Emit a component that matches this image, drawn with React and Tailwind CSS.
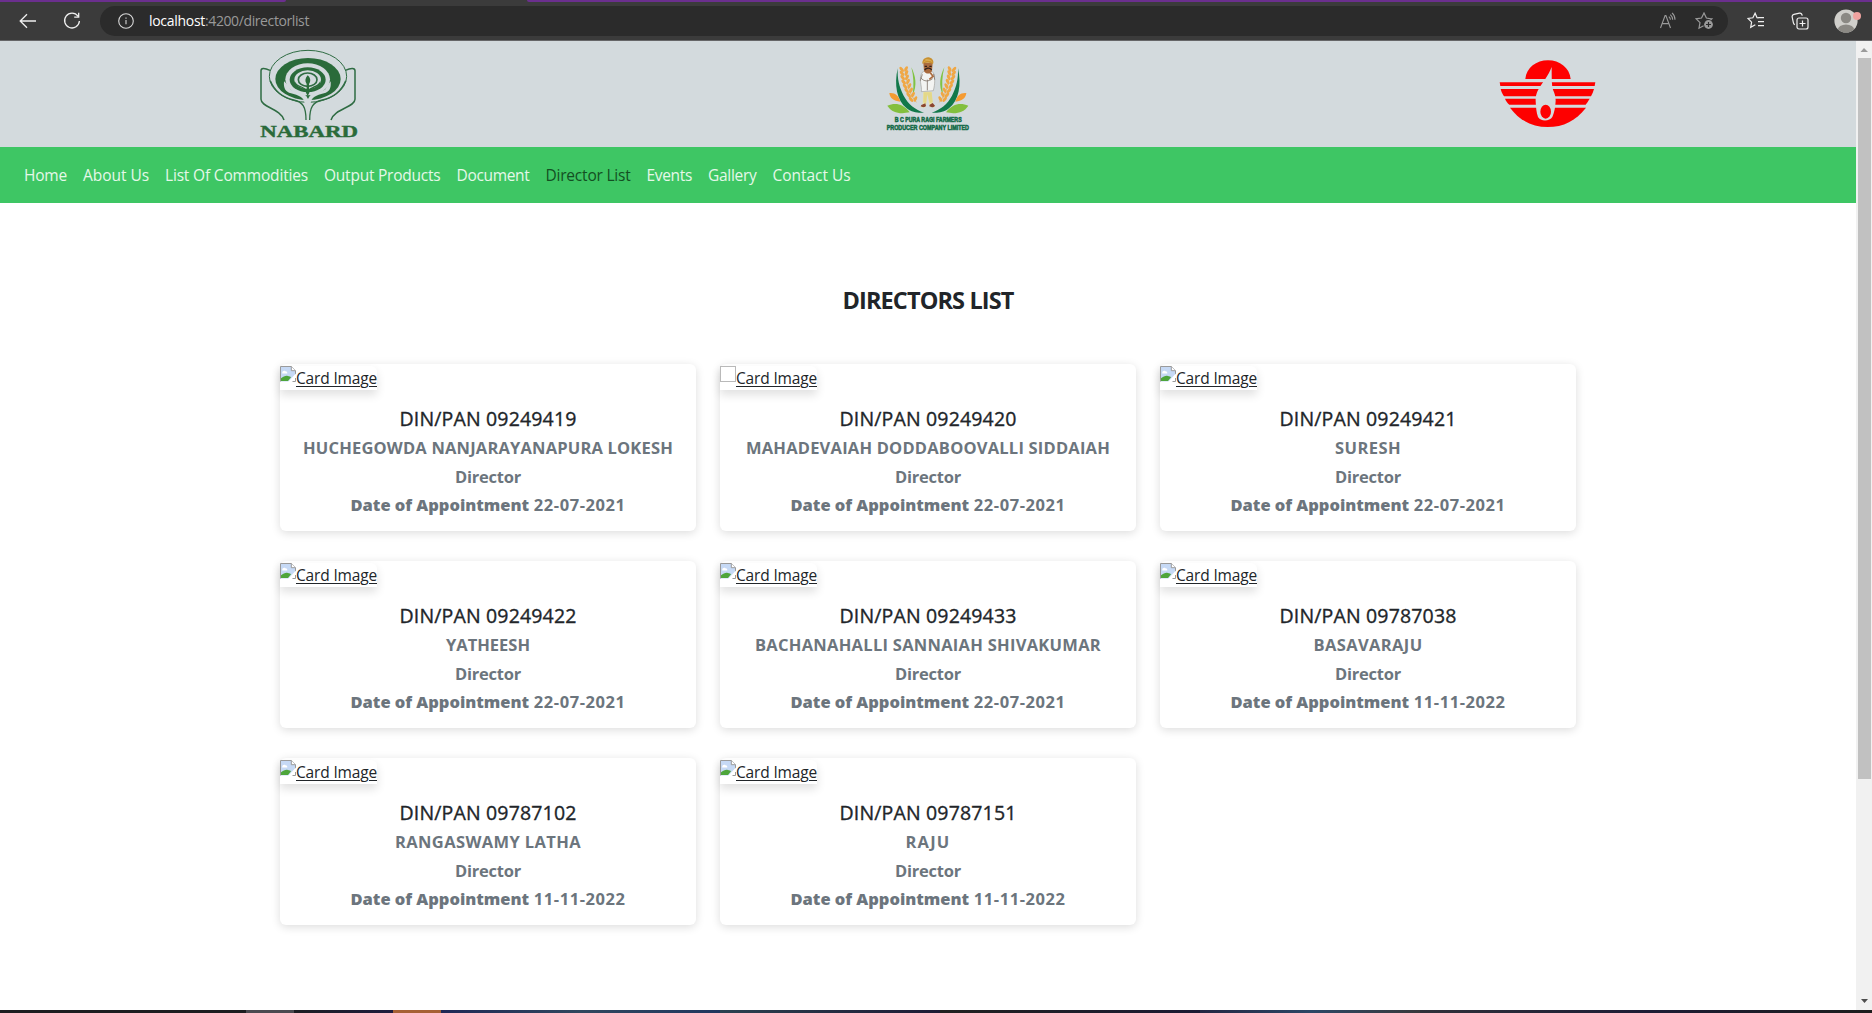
import { useLayoutEffect, useRef, useState } from "react";

const NAV = [
  ["Home", 43],
  ["About Us", 66],
  ["List Of Commodities", 143],
  ["Output Products", 116.5],
  ["Document", 73],
  ["Director List", 85],
  ["Events", 45.5],
  ["Gallery", 48.5],
  ["Contact Us", 78],
];

const DIRECTORS = [
  { din: "09249419", name: "HUCHEGOWDA NANJARAYANAPURA LOKESH", w: 370, date: "22-07-2021" },
  { din: "09249420", name: "MAHADEVAIAH DODDABOOVALLI SIDDAIAH", w: 364, date: "22-07-2021", empty: true },
  { din: "09249421", name: "SURESH", w: 66, date: "22-07-2021" },
  { din: "09249422", name: "YATHEESH", w: 84, date: "22-07-2021" },
  { din: "09249433", name: "BACHANAHALLI SANNAIAH SHIVAKUMAR", w: 346, date: "22-07-2021" },
  { din: "09787038", name: "BASAVARAJU", w: 109, date: "11-11-2022" },
  { din: "09787102", name: "RANGASWAMY LATHA", w: 186, date: "11-11-2022" },
  { din: "09787151", name: "RAJU", w: 45, date: "11-11-2022" },
];

// One line of text whose tracking is adjusted so that it fills the given width.
function Fit({ width, className = "", children }) {
  const ref = useRef(null);
  const [spacing, setSpacing] = useState(0);
  useLayoutEffect(() => {
    const el = ref.current;
    const natural = el.getBoundingClientRect().width;
    setSpacing((width - natural) / el.textContent.length);
  }, [width]);
  return (
    <span ref={ref} className={`inline-block whitespace-pre ${className}`} style={{ letterSpacing: `${spacing}px` }}>
      {children}
    </span>
  );
}

function Toolbar() {
  return (
    <header className="h-[41px] shrink-0 bg-[#3b3b3b] border-b border-[#666668]">
      <div className="flex h-[2px]">
        <div className="w-[286px] rounded-br bg-[#6b2f8e]" />
        <div className="w-[241px]" />
        <div className="flex-1 rounded-bl bg-[#6b2f8e]" />
      </div>
      <div className="flex h-[38px] items-center">
        <svg className="ml-[19px]" width="18" height="16" viewBox="0 0 18 16" fill="none" stroke="#f0f0f0" strokeWidth="1.3">
          <path d="M17 8H1.5M8 1.2 1.2 8 8 14.8" />
        </svg>
        <svg className="ml-[26px]" width="18" height="18" viewBox="0 0 18 18" fill="none" stroke="#f0f0f0" strokeWidth="1.3">
          <path d="M15 4.2A7.4 7.4 0 1 0 16.4 9M15.7.8v4.4h-4.5" />
        </svg>
        <div className="ml-[19px] flex h-[30px] w-[1628px] items-center rounded-full bg-[#2b2b2b] pl-[18px] pr-[13px]">
          <svg width="16" height="16" viewBox="0 0 16 16" fill="none" stroke="#d8d8d8" strokeWidth="1.1">
            <circle cx="8" cy="8" r="7.3" />
            <path d="M8 7v4.3M8 4.5v1.2" />
          </svg>
          <div className="ml-[15px] flex-1 text-[14px] leading-5">
            <Fit width={56} className="text-white">localhost</Fit>
            <Fit width={104} className="text-[#999]">:4200/directorlist</Fit>
          </div>
          <svg width="18" height="18" viewBox="0 0 18 18" fill="none" stroke="#9a9a9a" strokeWidth="1.1">
            <path d="M1.5 16 6.1 3.6h.8L11.5 16M3.2 11.6h6.6M9.8 4.6a4.4 4.4 0 0 1 1.6 3.2M11.3 2.6a7 7 0 0 1 2.4 5.2M13 .8a9 9 0 0 1 3 7" />
          </svg>
          <svg className="ml-[18px]" width="20" height="18" viewBox="0 0 20 18" fill="none" stroke="#9a9a9a" strokeWidth="1.2">
            <path d="M16 6.9 11.4 6 9 1 6.5 6l-5.3.8L5 10.6l-1 5.6 4.6-2.4" />
            <path d="M16 6.8h.8L15.6 8" />
            <circle cx="13.5" cy="12.5" r="4.4" fill="#9a9a9a" stroke="none" />
            <path d="M13.5 10v5M11 12.5h5" stroke="#2b2b2b" />
          </svg>
        </div>
        <svg className="ml-[19px]" width="18" height="18" viewBox="0 0 18 18" fill="none" stroke="#f0f0f0" strokeWidth="1.2">
          <path d="M11.5 5.8 10 5.6 8.1 1.2 5.9 5.8 1 6.5l3.6 3.6-.9 5.2 4.6-2.5M11.2 5.7H17M11 9.7h6M11 13.6h6" />
        </svg>
        <svg className="ml-[26px]" width="18" height="18" viewBox="0 0 18 18" fill="none" stroke="#f0f0f0" strokeWidth="1.2">
          <rect x="6" y="6" width="11" height="11" rx="2" />
          <path d="M11.5 8.5v6M8.5 11.5h6M3.8 12.7C2.7 12 2.5 11.3 2.3 10.3L1.2 5.2C.9 3.7 1.5 2.8 2.9 2.4L8.5 1.1c1.4-.3 2.2.2 2.8 2.6" />
        </svg>
        <svg className="ml-[24px]" width="28" height="24" viewBox="0 0 28 24">
          <clipPath id="avatar"><circle cx="13" cy="12" r="11.6" /></clipPath>
          <circle cx="13" cy="12" r="11.6" fill="#d0cfcb" />
          <g clipPath="url(#avatar)" fill="#8b8984">
            <circle cx="13" cy="9" r="5.2" />
            <ellipse cx="13" cy="20.8" rx="8.2" ry="5.4" />
          </g>
          <circle cx="24" cy="7" r="4" fill="#f0a3a0" />
        </svg>
      </div>
    </header>
  );
}

function NabardLogo() {
  return (
    <svg width="140" height="106" viewBox="-2 3 420 318" fill="none" stroke="#2f6c43" strokeWidth="4">
      <ellipse cx="205" cy="109" rx="116" ry="78" strokeWidth="3" />
      <ellipse cx="205" cy="117" rx="98" ry="63" fill="#2a6b3a" stroke="none" />
      <ellipse cx="204" cy="118" rx="67" ry="48" fill="#d3dadd" stroke="none" />
      <ellipse cx="204" cy="119" rx="54" ry="37" fill="#2a6b3a" stroke="none" />
      <ellipse cx="204" cy="119" rx="40" ry="28" fill="#d3dadd" stroke="none" />
      <ellipse cx="204" cy="119" rx="28" ry="20" strokeWidth="5" />
      <path
        d="M133 124c-2 21 5 32 21 36 22 6 40 12 41 31l1 50h16l1-50c1-19 17-25 40-31 16-4 22-15 20-36-8 10-12 16-15 23-12 11-37 7-48 21l-5 9-5-9c-12-14-37-10-48-21-5-8-9-14-19-23Z"
        fill="#d3dadd"
        stroke="none"
      />
      <path d="M165 123c-1 24 30 13 34 35l5 10 5-10c5-22 36-10 33-35-9 19-31 14-35 30h-7c-4-17-27-10-35-30Z" fill="#2a6b3a" stroke="none" />
      <path d="M204 106c-8 9-9 18-3 26v20h7v-20c6-8 5-18-4-26Z" fill="#2a6b3a" stroke="none" />
      <path d="M91 91c-18-8-27-7-27 1v86c0 24 59 28 69 62M317 91c18-8 29-7 29 1v86c0 24-62 28-72 62" strokeWidth="4.5" />
      <path d="M92 122c15 36 40 51 70 58 28 6 37 21 37 60M318 122c-15 36-40 51-70 58-28 6-38 21-38 60" />
      <text x="62" y="290" textLength="293" lengthAdjust="spacingAndGlyphs" fill="#2a6b3a" stroke="#2a6b3a" strokeWidth="1.2" className="font-['Liberation_Serif'] text-[49px] font-bold">
        NABARD
      </text>
    </svg>
  );
}

// Grain kernels of the left wheat ear, bottom to top: x, y.
const KERNELS = [
  [129, 163], [122, 150], [116, 137], [111, 124], [107, 111], [104, 98], [102, 85], [101, 73],
];

function WheatHalf() {
  return (
    <g>
      <path d="M83 70C72 120 80 166 110 190c17 14 36 14 52 13-26-9-47-25-61-51C87 126 82 101 83 70Z" fill="#12784a" />
      <path d="M124 67c13 26 18 55 4 83 4-30 3-55-4-83Z" fill="#80c342" />
      <path d="M109 77c0 41 9 69 30 95" stroke="#f3a53a" strokeWidth="2" fill="none" />
      {KERNELS.map(([x, y]) => (
        <g key={y} fill="#f0a744">
          <ellipse cx={x - 6} cy={y} rx="4.5" ry="9" transform={`rotate(-38 ${x - 6} ${y})`} />
          <ellipse cx={x + 7} cy={y - 1} rx="4.5" ry="9" transform={`rotate(28 ${x + 7} ${y - 1})`} />
        </g>
      ))}
      <path d="M58 144c17-2 28 8 33 26-20-3-31-9-33-26Z" fill="#f59b32" />
      <path d="M52 182c25-10 48-5 67 20-28 6-53 2-67-20Z" fill="#83bf3e" />
    </g>
  );
}

function FarmersLogo() {
  return (
    <svg width="120" height="106" viewBox="-6 -12 360 318">
      <WheatHalf />
      <g transform="translate(347 0) scale(-1 1)">
        <WheatHalf />
      </g>
      <path d="M160 140l-2 40-6 5c6 5 14 3 16-3l4-34 6 32c-1 6 10 9 18 5l-8-7-3-38Z" fill="#ece2a8" />
      <path d="M161 142l-1 30 8 3 4-27 7 26 9-2-3-30Z" fill="#e3d889" />
      <path d="M154 180l12-5 2 8c-5 5-12 4-16 1ZM179 179l9-5 7 8c-5 6-12 5-17 2Z" fill="#8a4531" />
      <path d="M157 82c8-6 26-6 33 1 6 17 5 33 0 54l-36 3c3-18-10-37 3-58Z" fill="#f3f4f2" stroke="#8d8b84" strokeWidth="1.5" />
      <path d="M152 98c10 13 24 12 36 3M172 104v32M157 88l-6 19M191 87l3 17" stroke="#81756b" strokeWidth="2.5" fill="none" />
      <path d="M160 54h28l-2 23c-4 11-18 12-24 1Z" fill="#a96a3d" />
      <path d="M164 75c5-7 15-7 21-1M164 64h7M178 64h7" stroke="#32211c" strokeWidth="4" fill="none" />
      <path d="M157 56c0-14 9-18 17-19 10-1 20 11 15 20-10-5-23-5-32-1Z" fill="#c8902f" />
      <path d="M160 52c8-8 20-9 27-1M166 43l15 3" stroke="#e1ba65" strokeWidth="2" fill="none" />
      <path d="M181 83l8 11-11 9" stroke="#a96a3d" strokeWidth="5" fill="none" />
      <text x="74" y="232" textLength="201" lengthAdjust="spacingAndGlyphs" fill="#146a47" stroke="#146a47" strokeWidth="1.6" className="font-['Liberation_Sans'] text-[20px] font-bold">
        B C PURA RAGI FARMERS
      </text>
      <text x="50" y="256" textLength="247" lengthAdjust="spacingAndGlyphs" fill="#146a47" stroke="#146a47" strokeWidth="1.6" className="font-['Liberation_Sans'] text-[20px] font-bold">
        PRODUCER COMPANY LIMITED
      </text>
    </svg>
  );
}

function FlameLogo() {
  return (
    <svg width="130" height="106" viewBox="5 -12 390 318" fill="#fe0000">
      <path d="M135 102c3-34 33-56 68-56s65 23 68 56Z" />
      <path d="M58 112h287l-2 11H60Z" />
      <path d="M61 132h280c-2 8-5 15-9 22H71c-5-7-8-14-10-22Z" />
      <path d="M74 161h254c-4 7-8 13-12 18H87c-6-5-10-11-13-18Z" />
      <path d="M89 188h228c-30 39-68 58-115 58S117 226 89 188Z" />
      <path d="M214 66c-11 28-24 42-36 61-7 12-13 24-12 41 1 20 2 35 7 48 7 14 35 14 43 0 6-14 9-29 10-49 0-19-6-26-10-39-2-20-2-39-2-62Z" fill="#d3dadd" />
      <ellipse cx="196" cy="200" rx="16" ry="21" />
    </svg>
  );
}

function BrokenImage({ empty }) {
  if (empty) return <span className="h-4 w-4 shrink-0 border border-[#b9b9b9]" />;
  return (
    <svg className="shrink-0" width="16" height="16" viewBox="0 0 16 16">
      <path d="M.5 15.5V.5h10.8l4.2 4.2v4.2l-6 6.6Z" fill="#c6d9f5" />
      <path d="M1 15v-2.8c2.5-1.8 4.6-2.8 6.8-2.3 1.6.1 2.6.6 3.2 1.4L8 15Z" fill="#4ea53b" />
      <path d="M2.2 7c0-2 2-2.8 3.2-1.7C6.7 5.2 7.4 6 7.3 7.5H2.2Z" fill="#fff" />
      <path d="M.5 15.5V.5h10.8l4.2 4.2v4" fill="none" stroke="#9a9a9a" />
      <path d="M11.3.5v4.2h4.2" fill="#fff" stroke="#9a9a9a" />
      <path d="M8 15.9 15.9 7.5v3.2l-3.4 5.2Z" fill="#fff" />
      <path d="M12.5 15.5h3V12" fill="none" stroke="#9a9a9a" />
    </svg>
  );
}

function DirectorCard({ din, name, w, date, empty }) {
  return (
    <article className="h-[167px] rounded-md bg-white pt-[2px] text-center shadow-[0_2px_10px_rgba(0,0,0,0.14)]">
      <div className="flex h-6 w-[97px] rounded-tr-md bg-white shadow-[0_5px_10px_rgba(0,0,0,0.12)]">
        <BrokenImage empty={empty} />
        <a className="text-[15.5px] leading-[25px] text-[#212529]">
          <Fit width={81} className="underline decoration-1 underline-offset-2">Card Image</Fit>
        </a>
      </div>
      <h5 className="mt-[17px] h-6 text-[19.5px] font-medium leading-6 text-[#212529] [-webkit-text-stroke:0.35px_#212529]">
        <Fit width={177}>{`DIN/PAN ${din}`}</Fit>
      </h5>
      <div className="mt-[3px] text-[16.5px] font-bold leading-[28.7px] text-[#6c757d]">
        <div className="h-[28.5px]"><Fit width={w}>{name}</Fit></div>
        <div className="h-[28.7px]"><Fit width={66}>Director</Fit></div>
        <div className="flex h-[28.7px] justify-center">
          <Fit width={178.5} className="font-extrabold">Date of Appointment</Fit>
          <Fit width={96.5}>{` ${date}`}</Fit>
        </div>
      </div>
    </article>
  );
}

function Scrollbar() {
  return (
    <div className="flex w-4 shrink-0 flex-col items-center bg-[#f1f1f1]">
      <svg className="shrink-0" width="16" height="17" viewBox="0 0 16 17"><path d="M4.5 11 8 7l4 4Z" fill="#9b9b9b" /></svg>
      <div className="h-[721px] w-[13px] bg-[#c1c1c1]" />
      <svg className="mt-auto" width="16" height="17" viewBox="0 0 16 17"><path d="m5 6 3.5 4L12 6Z" fill="#4d4d4d" /></svg>
    </div>
  );
}

export default function App() {
  return (
    <div className="flex h-[1013px] w-[1872px] flex-col overflow-hidden bg-white font-['Open_Sans',sans-serif]">
      <Toolbar />
      <div className="flex h-[969px] shrink-0">
        <div className="flex-1">
          <div className="grid h-[106px] grid-cols-3 justify-items-center bg-[#d3dadd]">
            <NabardLogo />
            <FarmersLogo />
            <FlameLogo />
          </div>
          <nav className="flex h-14 items-center gap-4 bg-[#3ec664] pl-6 pt-[2px] text-[15.5px] text-[#e5f8e9]">
            {NAV.map(([label, width]) => (
              <a key={label} className={label === "Director List" ? "text-[#134f22]" : ""}>
                <Fit width={width}>{label}</Fit>
              </a>
            ))}
          </nav>
          <main className="mx-auto w-[1296px] pt-[79px]">
            <h2 className="h-9 text-center text-[23.5px] font-bold leading-9 text-[#212529]">
              <Fit width={171}>DIRECTORS LIST</Fit>
            </h2>
            <div className="mt-[46px] grid grid-cols-3 gap-x-6 gap-y-[30px]">
              {DIRECTORS.map((d) => <DirectorCard key={d.din} {...d} />)}
            </div>
          </main>
        </div>
        <Scrollbar />
      </div>
      <footer className="flex h-[3px] shrink-0">
        <div className="w-[246px] bg-[#1d1d20]" />
        <div className="w-[48px] bg-[#4b4a50]" />
        <div className="w-[99px] bg-linear-to-r from-[#1d1d22] to-[#1e1c3e]" />
        <div className="w-[48px] bg-[#a66034]" />
        <div className="w-[279px] bg-linear-to-r from-[#1f2856] via-[#30475e] to-[#20365f]" />
        <div className="w-[220px] bg-linear-to-r from-[#2a4150] to-[#1d1b35]" />
        <div className="w-[260px] bg-linear-to-r from-[#20201f] to-[#1b1a33]" />
        <div className="w-[220px] bg-linear-to-r from-[#232743] via-[#2b4766] to-[#38393c]" />
        <div className="flex-1 bg-linear-to-r from-[#30313a] via-[#1d1c35] to-[#1d1d1d]" />
      </footer>
    </div>
  );
}
